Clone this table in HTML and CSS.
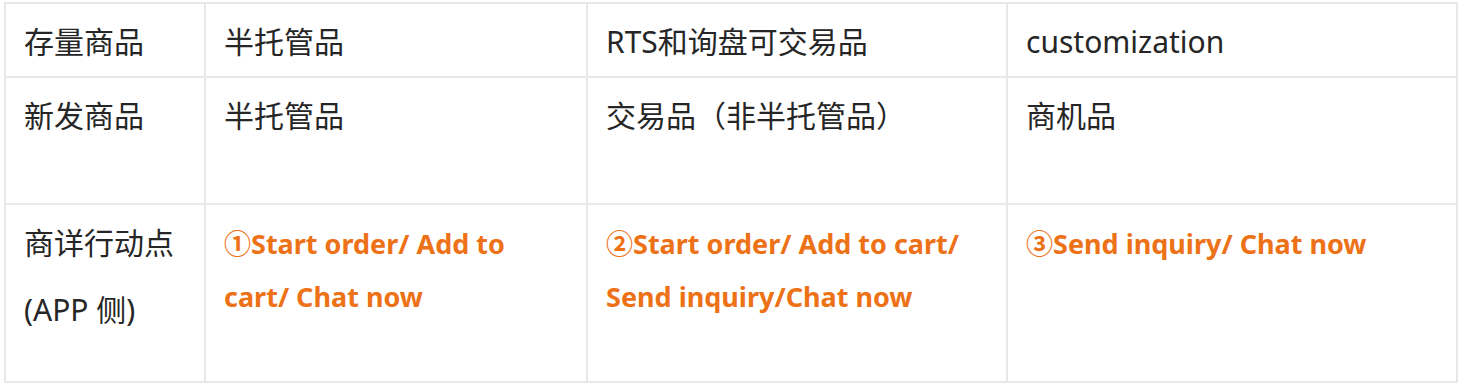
FILE: index.html
```html
<!DOCTYPE html>
<html>
<head>
	<meta charset="utf-8">
	<title>商详行动点</title>
	<link rel="stylesheet" href="styles.css">
</head>
<body>
	<table class="grid">
		<colgroup>
			<col class="c1">
			<col class="c2">
			<col class="c3">
			<col class="c4">
		</colgroup>
		<tr class="r1">
			<td>存量商品</td>
			<td>半托管品</td>
			<td>RTS和询盘可交易品</td>
			<td>customization</td>
		</tr>
		<tr class="r2">
			<td>新发商品</td>
			<td>半托管品</td>
			<td>交易品（非半托管品）</td>
			<td>商机品</td>
		</tr>
		<tr class="r3">
			<td>
				<div>商详行动点</div>
				<div class="side">(APP 侧)</div>
			</td>
			<td><span class="action">①Start order/ Add to cart/ Chat now</span></td>
			<td><span class="action">②Start order/ Add to cart/ Send inquiry/Chat now</span></td>
			<td><span class="action">③Send inquiry/ Chat now</span></td>
		</tr>
	</table>
</body>
</html>
```

FILE: styles.css
```css
body {
	margin: 0;
	padding: 2px 4px;
	background: #ffffff;
	font-family: "Noto Sans", "Noto Sans CJK SC", sans-serif;
	color: #262626;
}

.grid {
	border-collapse: separate;
	border-spacing: 0;
	table-layout: fixed;
	width: 1454px;
	border-top: 2px solid #e8e8e8;
	border-left: 2px solid #e8e8e8;
}

.c1 { width: 200px; }
.c2 { width: 382px; }
.c3 { width: 420px; }
.c4 { width: 450px; }

.grid td {
	box-sizing: border-box;
	vertical-align: top;
	padding: 12px 20px 8px 18px;
	font-size: 30px;
	line-height: 52px;
	border-right: 2px solid #e8e8e8;
	border-bottom: 2px solid #e8e8e8;
}

.r1 td { height: 74px; }
.r2 td { height: 127px; }
.r3 td { height: 178px; }

.side {
	margin-top: 15px;
}

.action {
	color: #ed7116;
	font-weight: bold;
	font-size: 27px;
}
```
